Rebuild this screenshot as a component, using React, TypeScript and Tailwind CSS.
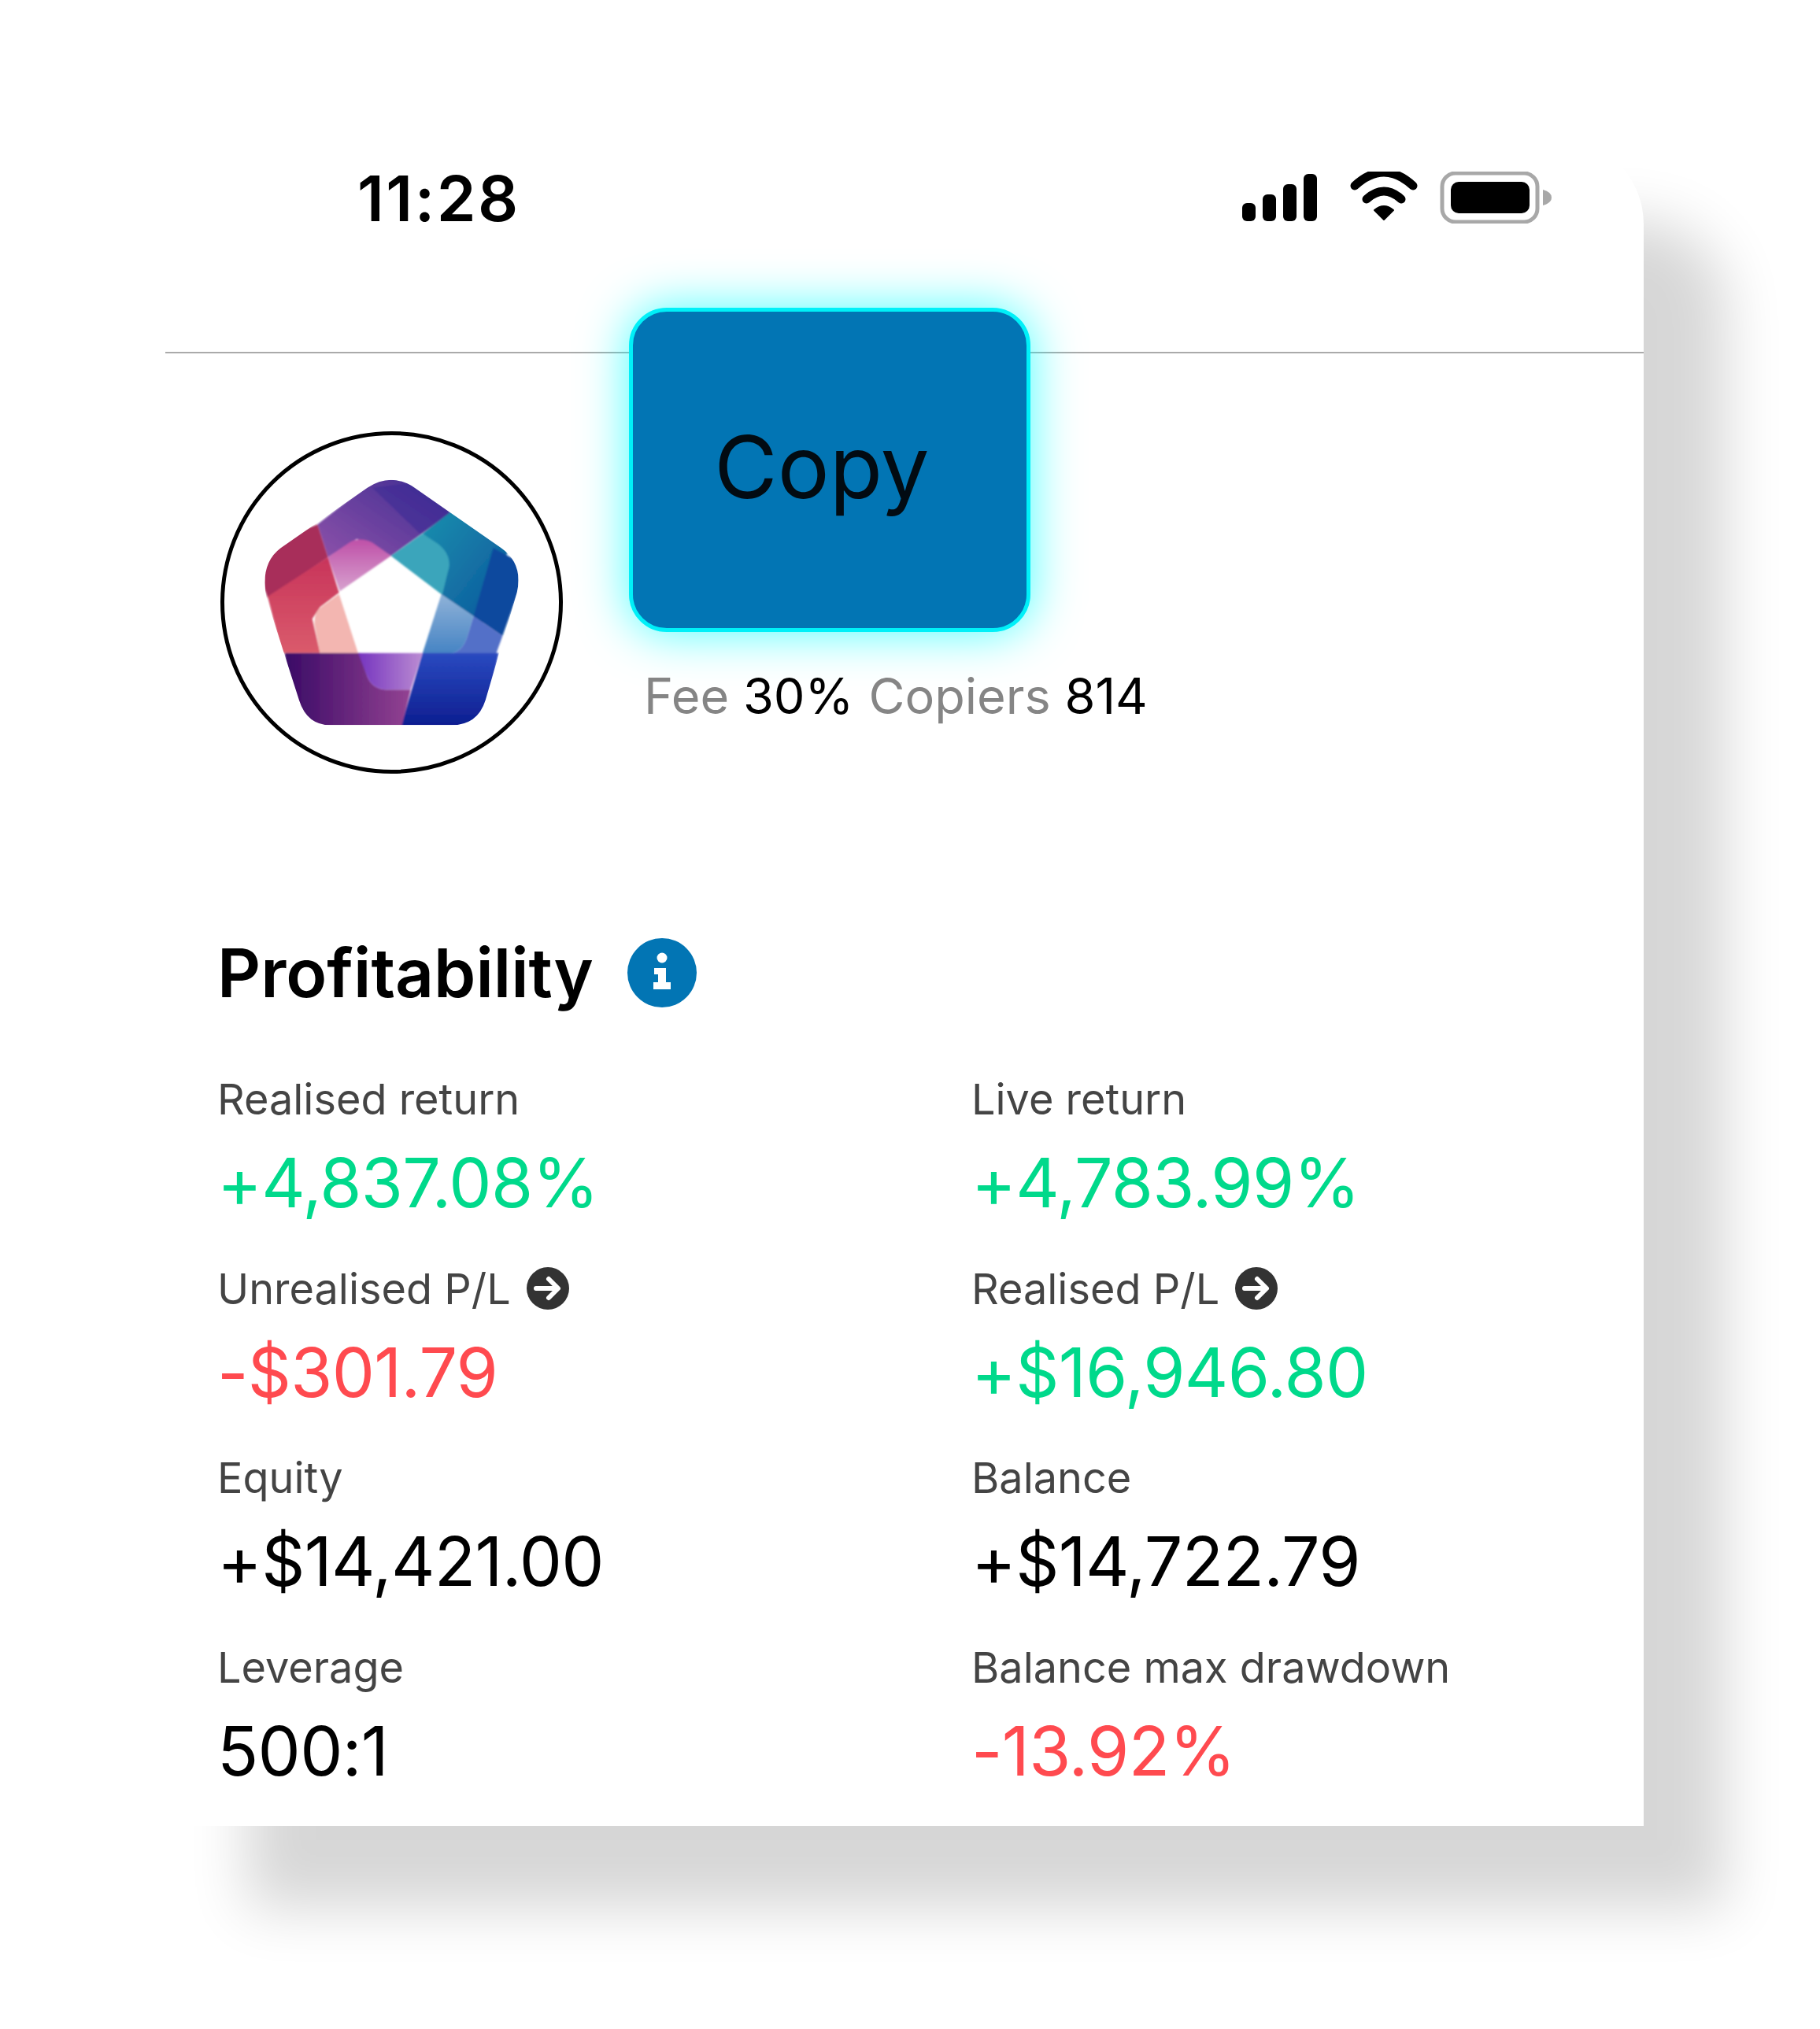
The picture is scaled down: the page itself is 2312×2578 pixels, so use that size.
const sans = "font-['Inter','Noto_Sans',sans-serif]";

type Stat = { label: string; value: string; tone: string; arrow?: boolean };

const stats: Stat[] = [
  { label: "Realised return", value: "+4,837.08%", tone: "text-[#00d98b]" },
  { label: "Live return", value: "+4,783.99%", tone: "text-[#00d98b]" },
  { label: "Unrealised P/L", value: "-$301.79", tone: "text-[#ff4a4f]", arrow: true },
  { label: "Realised P/L", value: "+$16,946.80", tone: "text-[#00d98b]", arrow: true },
  { label: "Equity", value: "+$14,421.00", tone: "text-black" },
  { label: "Balance", value: "+$14,722.79", tone: "text-black" },
  { label: "Leverage", value: "500:1", tone: "text-black" },
  { label: "Balance max drawdown", value: "-13.92%", tone: "text-[#ff4a4f]" },
];

function StatusIcons() {
  return (
    <svg width="394" height="66" viewBox="1579 218 394 66" className="shrink-0">
      <rect x="1579" y="258" width="17" height="23" rx="6" fill="#000" />
      <rect x="1605" y="247" width="17" height="34" rx="6" fill="#000" />
      <rect x="1631" y="234" width="17" height="47" rx="6" fill="#000" />
      <rect x="1657" y="221" width="17" height="60" rx="6" fill="#000" />
      <path d="M1722 236 Q1759 202 1796 236" fill="none" stroke="#000" strokeWidth="11" strokeLinecap="round" />
      <path d="M1737 253 Q1759 233 1781 253" fill="none" stroke="#000" strokeWidth="11" strokeLinecap="round" />
      <path d="M1747 267 Q1759 257 1771 267 L1759 279 Z" fill="#000" stroke="#000" strokeWidth="2" strokeLinejoin="round" />
      <rect x="1833" y="220" width="121" height="62" rx="17" fill="none" stroke="#a8a8a8" strokeWidth="5" />
      <rect x="1844" y="231" width="100" height="40" rx="10" fill="#000" />
      <path d="M1961 241 Q1972 244 1972 251 Q1972 258 1961 261 Z" fill="#a8a8a8" />
    </svg>
  );
}

function Logo() {
  return (
    <svg viewBox="120 145 1305 1305" className="absolute -top-[5px] -left-[5px] w-[435px] h-[435px]">
      <defs>
        <clipPath id="penta">
          <path d="M680 360 Q770 300 860 360 L1190 590 Q1275 650 1250 760 L1130 1170 Q1100 1265 1000 1265 L540 1265 Q450 1265 420 1170 L295 780 Q270 650 350 590 Z" />
        </clipPath>
        <filter id="soft">
          <feGaussianBlur stdDeviation="3" />
        </filter>
        <linearGradient id="gTop" x1="0" y1="1" x2="1" y2="0">
          <stop offset="0" stopColor="#8d52aa" />
          <stop offset="1" stopColor="#37288f" />
        </linearGradient>
        <linearGradient id="gPink" x1="0" y1="0" x2="0" y2="1">
          <stop offset="0" stopColor="#bf50a8" />
          <stop offset="1" stopColor="#d7a2cf" />
        </linearGradient>
        <linearGradient id="gRed" x1="0" y1="0" x2="0" y2="1">
          <stop offset="0" stopColor="#c8345a" />
          <stop offset="1" stopColor="#da5b6c" />
        </linearGradient>
        <linearGradient id="gTeal" x1="0" y1="0" x2="1" y2="1">
          <stop offset="0" stopColor="#1b8fae" />
          <stop offset="1" stopColor="#0b559c" />
        </linearGradient>
        <linearGradient id="gSky" x1="0" y1="0" x2="0" y2="1">
          <stop offset="0" stopColor="#8fb2d8" />
          <stop offset="1" stopColor="#4684c4" />
        </linearGradient>
        <linearGradient id="gDeep" x1="0" y1="0" x2="0" y2="1">
          <stop offset="0" stopColor="#2a4ac0" />
          <stop offset="1" stopColor="#0c1c8e" />
        </linearGradient>
        <linearGradient id="gPlum" x1="0" y1="0" x2="1" y2="0">
          <stop offset="0" stopColor="#3a0a66" />
          <stop offset="1" stopColor="#934292" />
        </linearGradient>
        <linearGradient id="gMid" x1="0" y1="0" x2="1" y2="0">
          <stop offset="0" stopColor="#7534bf" />
          <stop offset="1" stopColor="#bb8cd2" />
        </linearGradient>
      </defs>
      <g clipPath="url(#penta)" filter="url(#soft)">
        <polygon points="490,500 770,280 1000,455 770,620 640,555 530,625" fill="url(#gTop)" />
        <polygon points="700,360 880,535 1000,450 860,340" fill="#3b2a96" opacity="0.55" />
        <path d="M530 625 L610 570 Q650 545 700 570 L770 620 L575 755 Z" fill="url(#gPink)" />
        <polygon points="490,500 530,625 300,780 240,600" fill="#a82f5a" />
        <polygon points="300,775 530,625 572,760 500,815 470,860 500,990 355,990" fill="url(#gRed)" />
        <path d="M572 765 L645 992 L500 992 L478 880 Q476 830 510 810 Z" fill="#f3b6b1" />
        <polygon points="1000,450 1220,590 1120,874 962,768 985,660 980,610 890,535" fill="url(#gTeal)" />
        <path d="M770 620 L890 535 L950 575 Q995 610 992 660 L965 768 Z" fill="#3aa5bb" />
        <polygon points="1160,590 1290,660 1195,925 1085,850" fill="#0a4a9e" />
        <path d="M962 766 L1085 850 L1060 930 Q1040 990 990 992 L890 992 Z" fill="url(#gSky)" />
        <path d="M1085 850 L1195 925 L1170 995 L990 992 Q1040 990 1060 930 Z" fill="#5270c8" />
        <polygon points="890,990 1180,990 1120,1280 805,1280" fill="url(#gDeep)" />
        <path d="M365 990 L650 990 L680 1080 Q700 1130 760 1130 L845 1130 L808 1280 L400 1280 Z" fill="url(#gPlum)" />
        <path d="M645 990 L890 990 L845 1130 L760 1130 Q700 1130 680 1080 Z" fill="url(#gMid)" />
      </g>
    </svg>
  );
}

function InfoIcon() {
  return (
    <svg width="88" height="88" viewBox="0 0 88 88" className="shrink-0">
      <circle cx="44" cy="44" r="44" fill="#0275b4" />
      <circle cx="44" cy="25" r="6.5" fill="#fff" />
      <path d="M34 38 H49 V56 H55 V65 H33 V56 H39 V46 H34 Z" fill="#fff" />
    </svg>
  );
}

function ArrowBadge() {
  return (
    <svg width="54" height="54" viewBox="0 0 54 54" className="shrink-0 -mt-[2px]">
      <circle cx="27" cy="27" r="27" fill="#333" />
      <path d="M12 27 H39 M28 15 L40 27 L28 39" fill="none" stroke="#fff" strokeWidth="6" strokeLinejoin="round" strokeLinecap="round" />
    </svg>
  );
}

export default function App() {
  return (
    <div className={`w-[2312px] h-[2578px] bg-white pt-[175px] pl-[210px] overflow-hidden ${sans}`}>
      <div className="w-[1878px] h-[2145px] bg-white rounded-tr-[110px] shadow-[104px_105px_72px_rgba(0,0,0,0.16)]">
        <div className="h-[274px] border-b-2 border-[#aaaaaa] relative">
          <div className="flex items-start justify-between pl-[244px] pr-[116px] pt-[39px]">
            <span className="text-[80px] leading-[76px] font-semibold tracking-[2.5px] text-black">11:28</span>
            <div className="pt-[4px]">
              <StatusIcons />
            </div>
          </div>
        </div>

        <div className="flex pl-[70px] pt-[99px]">
          <div className="relative w-[435px] h-[435px] rounded-full border-[5px] border-black shrink-0">
            <Logo />
          </div>
          <div className="ml-[84px] -mt-[157px] relative">
            <button className="flex items-center justify-center w-[510px] h-[412px] pb-[8px] pr-[20px] rounded-[48px] bg-[#0275b4] border-[5px] border-[#00f0f8] shadow-[0_0_62px_rgba(0,255,255,0.72)] text-[110px] text-[#020b12]">
              Copy
            </button>
            <div className="mt-[43px] ml-[19px] flex gap-[19px] text-[63px] leading-[76px] text-black whitespace-nowrap">
              <span>
                <span className="text-[#858585]">Fee</span> 30%
              </span>
              <span>
                <span className="text-[#858585]">Copiers</span> 814
              </span>
            </div>
          </div>
        </div>

        <div className="pl-[66px] pt-[209px]">
          <div className="flex items-center gap-[43px] h-[88px]">
            <h2 className="text-[85.5px] leading-[88px] font-semibold text-black">Profitability</h2>
            <InfoIcon />
          </div>
          <div className="grid grid-cols-[958px_1fr] mt-[87px]">
            {stats.map((s) => (
              <div key={s.label} className="h-[240.7px]">
                <div className="flex items-center gap-[20px] h-[60px] text-[54px] leading-[60px] text-[#444444] whitespace-nowrap">
                  <span>{s.label}</span>
                  {s.arrow && <ArrowBadge />}
                </div>
                <div className={`mt-[22px] text-[86px] leading-[108px] tracking-[-0.7px] whitespace-nowrap ${s.tone}`}>{s.value}</div>
              </div>
            ))}
          </div>
        </div>
      </div>
    </div>
  );
}
